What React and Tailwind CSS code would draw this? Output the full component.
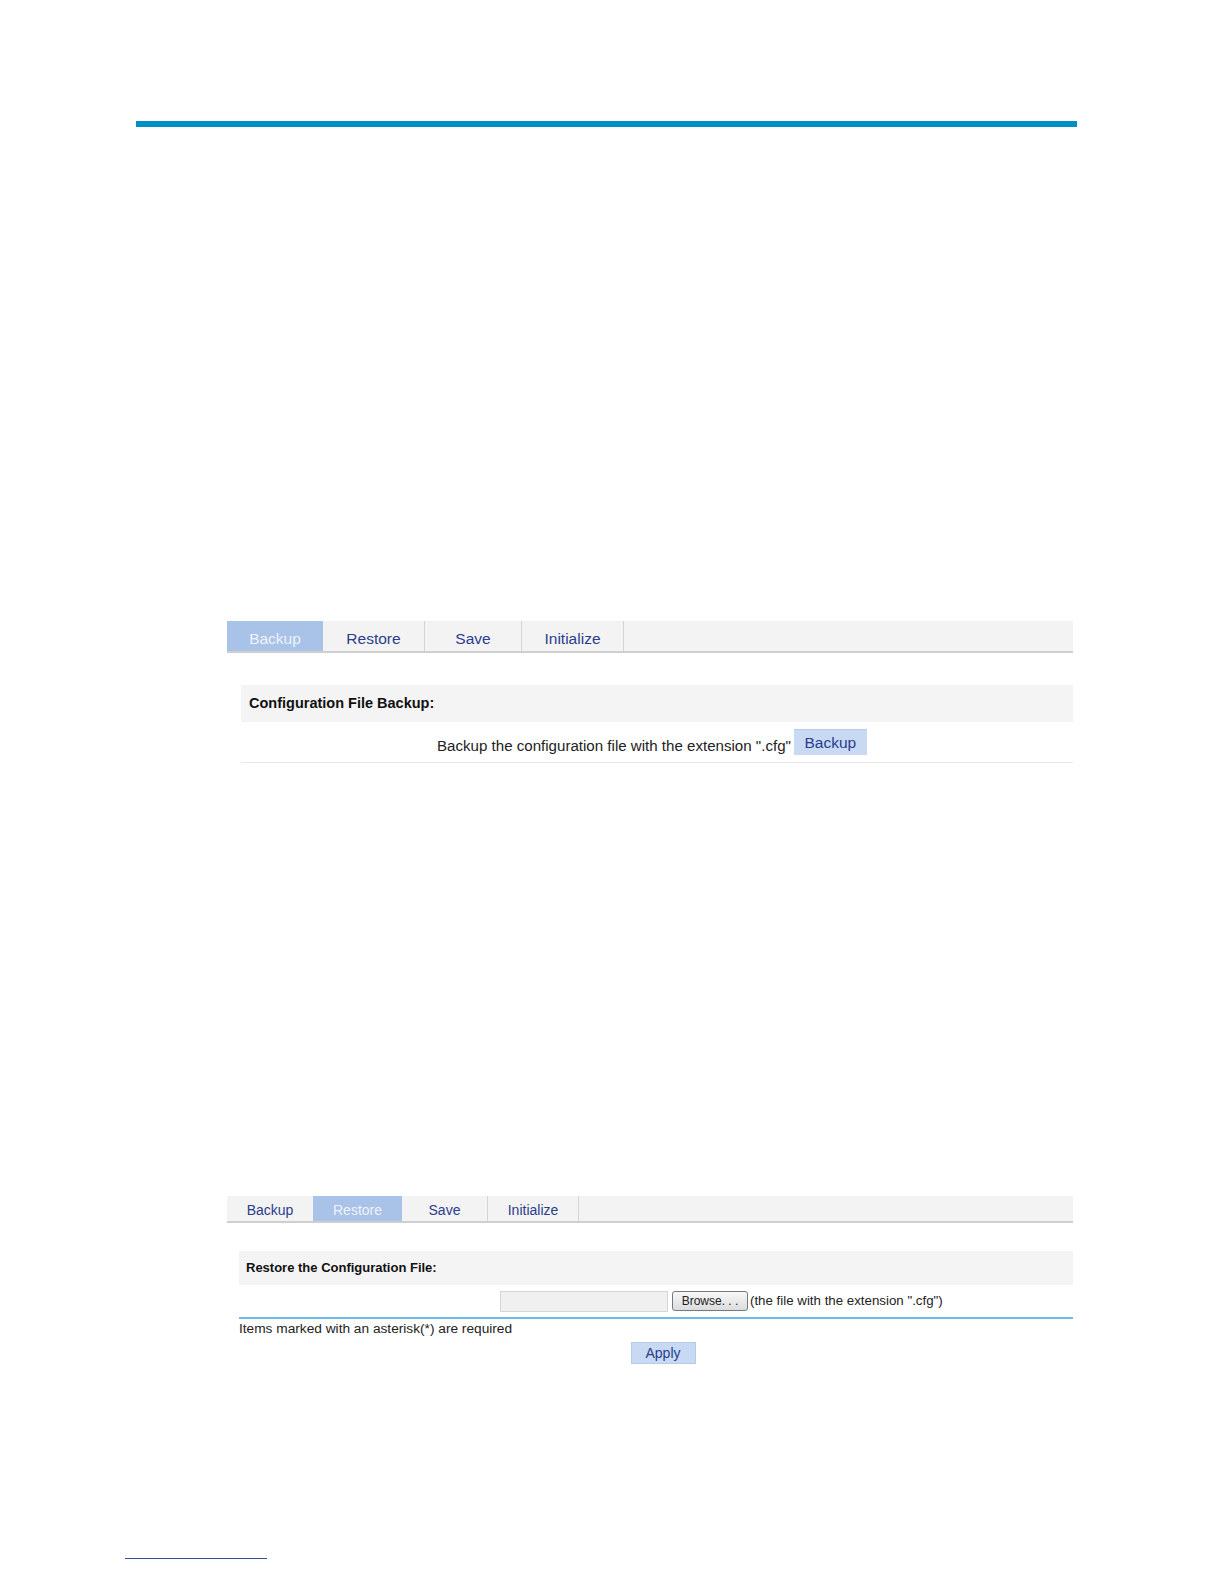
export default function App() {
  const font = { fontFamily: '"Liberation Sans", Arial, sans-serif' };
  return (
    <div className="w-[1224px] h-[1584px] bg-white relative overflow-hidden" style={font}>
      <div className="pt-[121px] pl-[136px]">
        <div className="w-[941px] h-[6px] bg-[#0090c4]" />
      </div>

      {/* Screenshot 1 */}
      <div className="mt-[494px] ml-[227px] w-[846px]">
        <div className="flex h-[32px] bg-[#f3f3f3] border-b-2 border-[#cfcfcf]">
          <div className="w-[96px] flex items-center justify-center pt-[5px] bg-[#a9c2e7] text-[#eef3fb] text-[15.5px]">Backup</div>
          <div className="w-[102px] flex items-center justify-center pt-[5px] border-r border-[#d4d4d4] text-[#2b3d8c] text-[15.5px]">Restore</div>
          <div className="w-[97px] flex items-center justify-center pt-[5px] border-r border-[#d4d4d4] text-[#2b3d8c] text-[15.5px]">Save</div>
          <div className="w-[102px] flex items-center justify-center pt-[5px] border-r border-[#d4d4d4] text-[#2b3d8c] text-[15.5px]">Initialize</div>
        </div>
        <div className="ml-[14px] mt-[32px]">
          <div className="h-[37px] bg-[#f4f4f4] flex items-center pl-[8px] text-[14.5px] font-bold text-[#111]">Configuration File Backup:</div>
          <div className="h-[41px] border-b border-[#e6e6e6] flex items-center pl-[196px]">
            <span className="text-[15.1px] text-[#222] mt-[8px]">Backup the configuration file with the extension ".cfg"</span>
            <button className="ml-[3px] w-[73px] h-[26px] bg-[#c7d9f3] border-t border-[#b6cbec] text-[#2b3d8c] text-[15.5px] leading-none flex items-center justify-center">Backup</button>
          </div>
        </div>
      </div>

      {/* Screenshot 2 */}
      <div className="mt-[433px] ml-[227px] w-[846px]">
        <div className="flex h-[27px] bg-[#f3f3f3] border-b-2 border-[#cfcfcf]">
          <div className="w-[86px] flex items-center justify-center pt-[4px] text-[#2b3d8c] text-[14px]">Backup</div>
          <div className="w-[89px] flex items-center justify-center pt-[4px] bg-[#a9c2e7] text-[#eef3fb] text-[14px]">Restore</div>
          <div className="w-[86px] flex items-center justify-center pt-[4px] border-r border-[#d4d4d4] text-[#2b3d8c] text-[14px]">Save</div>
          <div className="w-[91px] flex items-center justify-center pt-[4px] border-r border-[#d4d4d4] text-[#2b3d8c] text-[14px]">Initialize</div>
        </div>
        <div className="ml-[12px] mt-[28px]">
          <div className="h-[34px] bg-[#f4f4f4] flex items-center pl-[7px] text-[13px] font-bold text-[#111]">Restore the Configuration File:</div>
          <div className="h-[34px] border-b-2 border-[#6cbbe9] flex items-center pl-[261px]">
            <div className="w-[168px] h-[21px] bg-[#f0f0f0] border border-[#d6d6d6]" />
            <button className="ml-[4px] w-[76px] h-[20px] rounded-[3px] border border-[#707a85] bg-gradient-to-b from-[#f8f8f8] to-[#dcdcdc] text-[12px] text-[#222] leading-none flex items-center justify-center">Browse. . .</button>
            <span className="ml-[2px] text-[13.3px] text-[#222]">(the file with the extension ".cfg")</span>
          </div>
          <div className="text-[13.7px] text-[#222] mt-[1px] leading-[17px]">Items marked with an asterisk(*) are required</div>
          <div className="flex justify-center mt-[5px]">
            <button className="ml-[14px] w-[65px] h-[22px] bg-[#c7d9f3] border border-[#b6cbec] text-[#2b3d8c] text-[14px] leading-none flex items-center justify-center">Apply</button>
          </div>
        </div>
      </div>

      <div className="absolute left-[125px] top-[1558px] w-[142px] h-px bg-[#3050a0]" />
    </div>
  );
}
